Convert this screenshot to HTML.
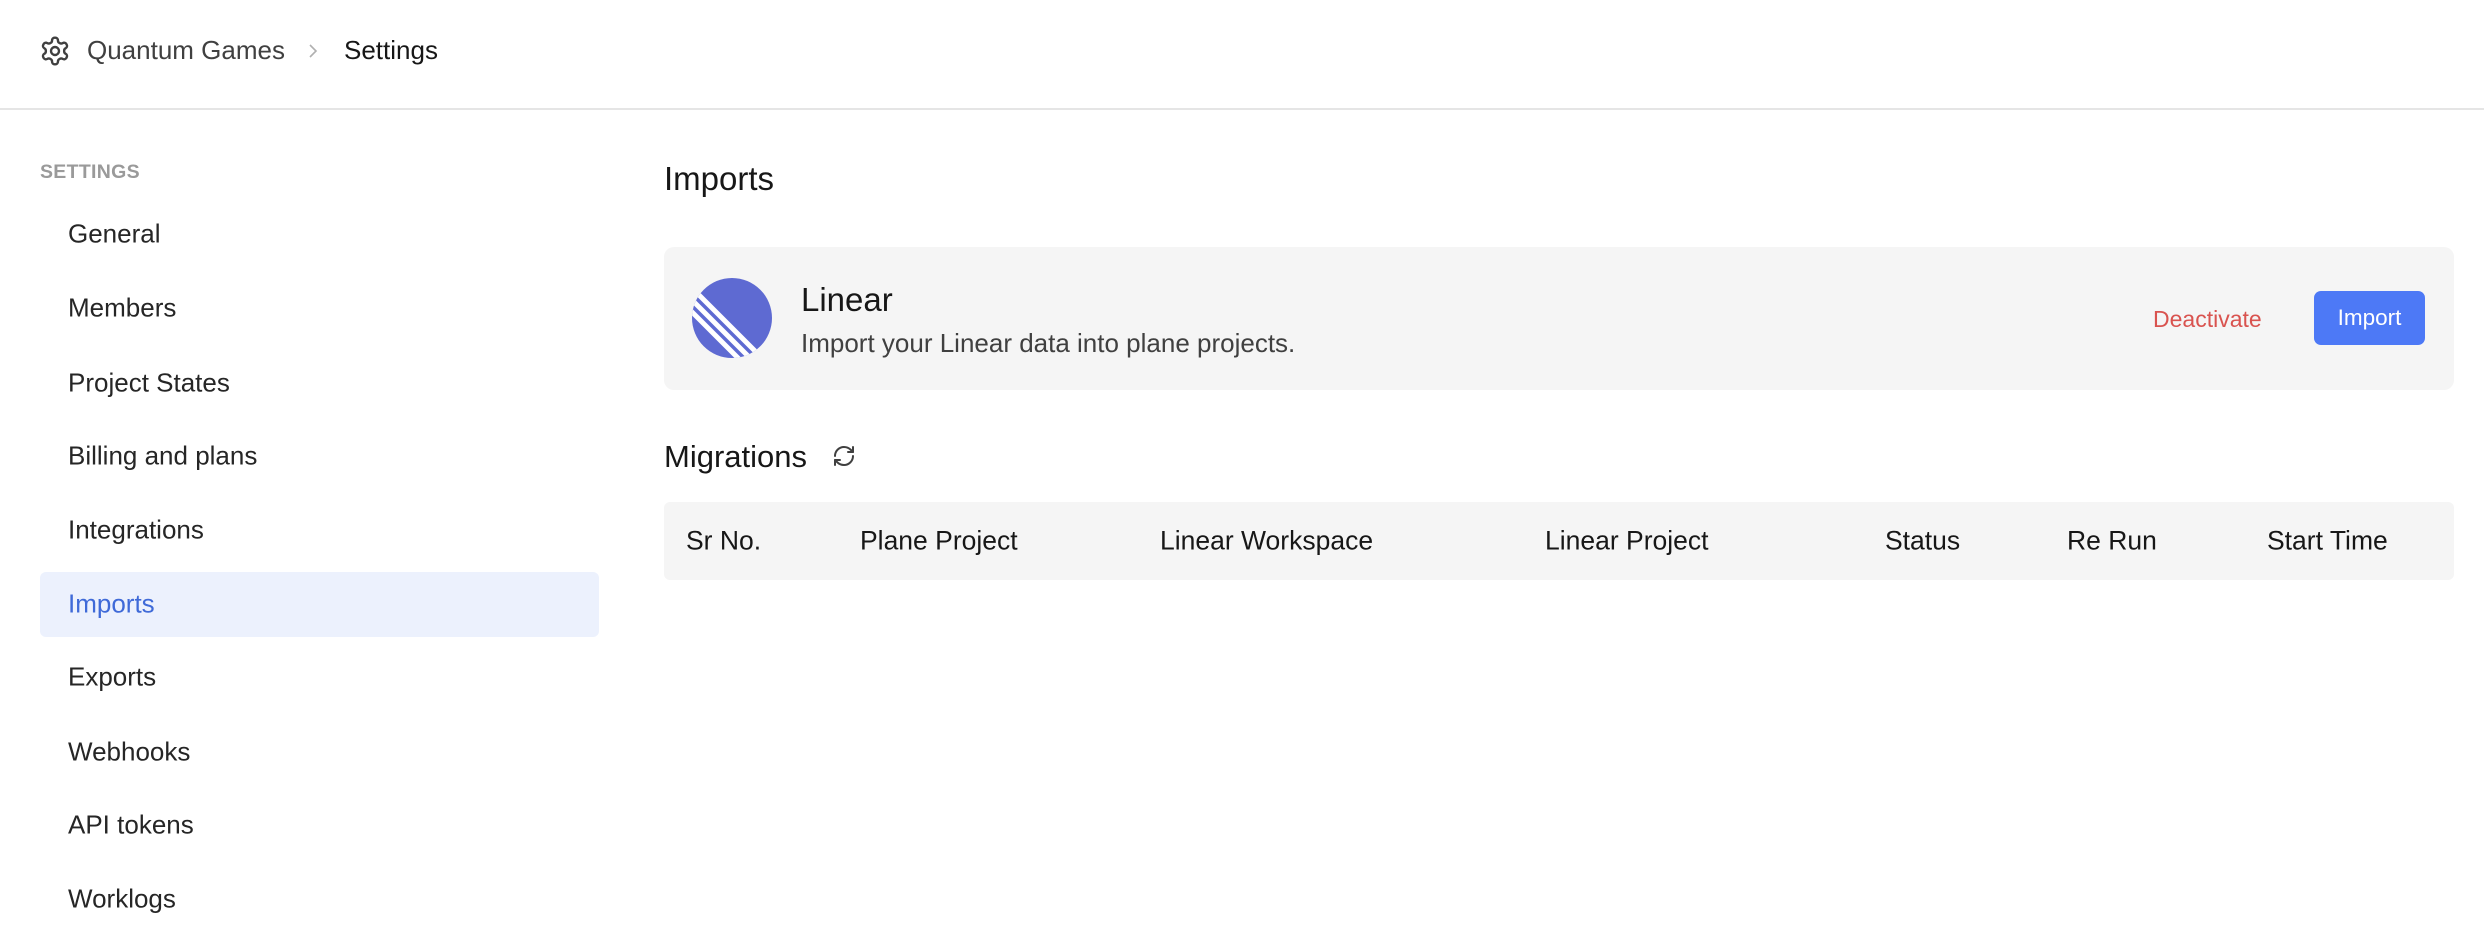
<!DOCTYPE html>
<html><head><meta charset="utf-8"><style>
*{margin:0;padding:0;box-sizing:border-box}
body{width:2484px;height:952px;background:#fff;font-family:"Liberation Sans",sans-serif;color:#1c1c1c;position:relative;overflow:hidden}
.abs{position:absolute;white-space:nowrap}
.hdr{position:absolute;left:0;top:0;width:2484px;height:110px;border-bottom:2px solid #e5e5e5}
.nav{position:absolute;left:68px;font-size:26px;color:#262626;transform:translateY(-50%)}
.th{position:absolute;top:541px;transform:translateY(-50%);font-size:26.5px;color:#171717}
</style></head><body>
<div class="hdr"></div>
<svg class="abs" style="left:39px;top:35px" width="32" height="32" viewBox="0 0 24 24" fill="none" stroke="#404040" stroke-width="1.8" stroke-linecap="round" stroke-linejoin="round"><path d="M12.22 2h-.44a2 2 0 0 0-2 2v.18a2 2 0 0 1-1 1.73l-.43.25a2 2 0 0 1-2 0l-.15-.08a2 2 0 0 0-2.730.73l-.22.38a2 2 0 0 0 .73 2.73l.15.1a2 2 0 0 1 1 1.72v.51a2 2 0 0 1-1 1.74l-.15.09a2 2 0 0 0-.73 2.73l.22.38a2 2 0 0 0 2.73.73l.15-.08a2 2 0 0 1 2 0l.43.25a2 2 0 0 1 1 1.73V20a2 2 0 0 0 2 2h.44a2 2 0 0 0 2-2v-.18a2 2 0 0 1 1-1.73l.43-.25a2 2 0 0 1 2 0l.15.08a2 2 0 0 0 2.73-.73l.22-.39a2 2 0 0 0-.73-2.73l-.15-.08a2 2 0 0 1-1-1.74v-.5a2 2 0 0 1 1-1.74l.15-.09a2 2 0 0 0 .73-2.73l-.22-.38a2 2 0 0 0-2.73-.73l-.15.08a2 2 0 0 1-2 0l-.43-.25a2 2 0 0 1-1-1.73V4a2 2 0 0 0-2-2z"/><circle cx="12" cy="12" r="3"/></svg>
<div class="abs" style="left:87px;top:35px;font-size:26px;color:#404040">Quantum Games</div>
<svg class="abs" style="left:306px;top:41px" width="14" height="20" viewBox="0 0 14 20" fill="none" stroke="#b0b0b0" stroke-width="1.6"><path d="M4 4l6 6-6 6"/></svg>
<div class="abs" style="left:344px;top:35px;font-size:26px;color:#171717">Settings</div>

<div class="abs" style="left:40px;top:161px;font-size:19.5px;font-weight:bold;color:#9a9a9a;letter-spacing:0.3px">SETTINGS</div>
<div class="abs" style="left:40px;top:572px;width:559px;height:65px;background:#ecf1fd;border-radius:6px"></div>
<div class="nav" style="top:234px">General</div>
<div class="nav" style="top:308px">Members</div>
<div class="nav" style="top:383px">Project States</div>
<div class="nav" style="top:456px">Billing and plans</div>
<div class="nav" style="top:530px">Integrations</div>
<div class="nav" style="top:604px;color:#3f6ad8">Imports</div>
<div class="nav" style="top:677px">Exports</div>
<div class="nav" style="top:752px">Webhooks</div>
<div class="nav" style="top:825px">API tokens</div>
<div class="nav" style="top:899px">Worklogs</div>

<div class="abs" style="left:664px;top:160px;font-size:33px;color:#171717">Imports</div>
<div class="abs" style="left:664px;top:247px;width:1790px;height:143px;background:#f5f5f5;border-radius:10px"></div>
<svg class="abs" style="left:692px;top:278px" width="80" height="80" viewBox="0 0 80 80"><defs><clipPath id="c"><circle cx="40" cy="40" r="40"/></clipPath></defs><circle cx="40" cy="40" r="40" fill="#5e6ad2"/><g clip-path="url(#c)" stroke="#fff" stroke-width="5"><line x1="-10" y1="0" x2="90" y2="100"/><line x1="-10" y1="12" x2="90" y2="112"/><line x1="-10" y1="24" x2="90" y2="124"/></g></svg>
<div class="abs" style="left:801px;top:281px;font-size:33px;color:#171717">Linear</div>
<div class="abs" style="left:801px;top:328px;font-size:26px;color:#404040">Import your Linear data into plane projects.</div>
<div class="abs" style="left:2153px;top:306px;font-size:23px;color:#d9534f">Deactivate</div>
<div class="abs" style="left:2314px;top:291px;width:111px;height:54px;background:#4d79f6;border-radius:7px;color:#fff;font-size:22.5px;text-align:center;line-height:54px">Import</div>

<div class="abs" style="left:664px;top:439px;font-size:31px;color:#171717">Migrations</div>
<svg class="abs" style="left:832px;top:444px" width="24" height="24" viewBox="0 0 24 24" fill="none" stroke="#404040" stroke-width="2" stroke-linecap="round" stroke-linejoin="round"><path d="M3 12a9 9 0 0 1 9-9 9.75 9.75 0 0 1 6.74 2.74L21 8"/><path d="M21 3v5h-5"/><path d="M21 12a9 9 0 0 1-9 9 9.75 9.75 0 0 1-6.74-2.74L3 16"/><path d="M8 16H3v5"/></svg>

<div class="abs" style="left:664px;top:502px;width:1790px;height:78px;background:#f5f5f5;border-radius:6px"></div>
<div class="th" style="left:686px">Sr No.</div>
<div class="th" style="left:860px">Plane Project</div>
<div class="th" style="left:1160px">Linear Workspace</div>
<div class="th" style="left:1545px">Linear Project</div>
<div class="th" style="left:1885px">Status</div>
<div class="th" style="left:2067px">Re Run</div>
<div class="th" style="left:2267px">Start Time</div>
</body></html>
